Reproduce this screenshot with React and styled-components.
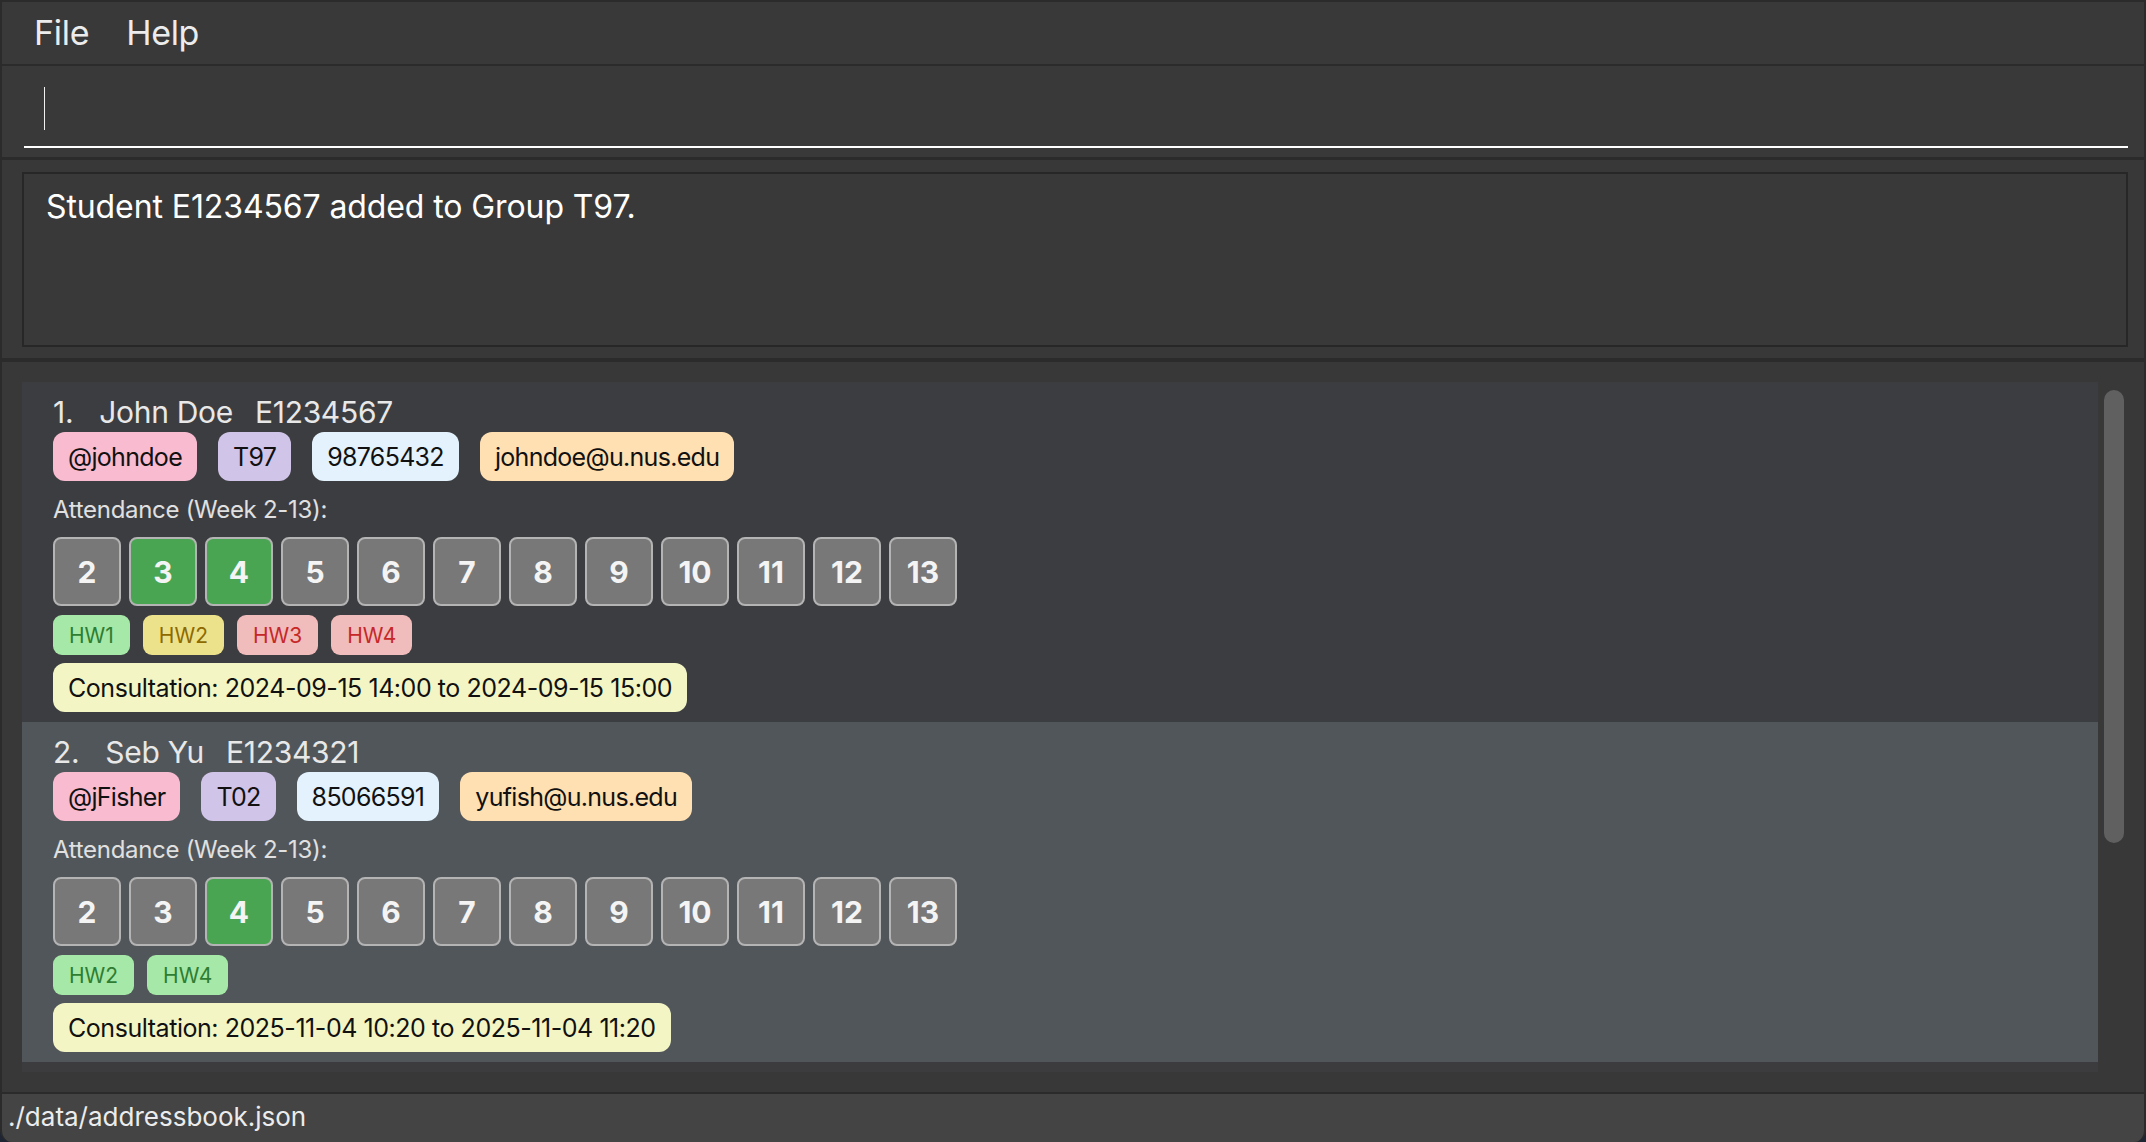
import React from "react";
import styled, { createGlobalStyle } from "styled-components";

const GlobalStyle = createGlobalStyle`
  * { box-sizing: border-box; }
  html, body {
    margin: 0;
    padding: 0;
    background: #1e2633;
    font-family: Inter, "Noto Sans", sans-serif;
  }
`;

const students = [
  {
    index: 1,
    name: "John Doe",
    id: "E1234567",
    telegram: "@johndoe",
    group: "T97",
    phone: "98765432",
    email: "johndoe@u.nus.edu",
    present: [3, 4],
    homework: [
      { label: "HW1", status: "done" },
      { label: "HW2", status: "pending" },
      { label: "HW3", status: "late" },
      { label: "HW4", status: "late" },
    ],
    consultation: "Consultation: 2024-09-15 14:00 to 2024-09-15 15:00",
  },
  {
    index: 2,
    name: "Seb Yu",
    id: "E1234321",
    telegram: "@jFisher",
    group: "T02",
    phone: "85066591",
    email: "yufish@u.nus.edu",
    present: [4],
    homework: [
      { label: "HW2", status: "done" },
      { label: "HW4", status: "done" },
    ],
    consultation: "Consultation: 2025-11-04 10:20 to 2025-11-04 11:20",
  },
];

const weeks = [2, 3, 4, 5, 6, 7, 8, 9, 10, 11, 12, 13];

export default function App() {
  return (
    <>
      <GlobalStyle />
      <Window>
        <MenuBar>
          <MenuItem>File</MenuItem>
          <MenuItem>Help</MenuItem>
        </MenuBar>

        <CommandArea>
          <CommandInput>
            <Caret />
          </CommandInput>
        </CommandArea>

        <ResultArea>
          <ResultBox>Student E1234567 added to Group T97.</ResultBox>
        </ResultArea>

        <ListArea>
          <ListView>
            {students.map((s, i) => (
              <Card key={s.id} $alt={i % 2 === 1}>
                <TitleRow>
                  <span>{s.index}.</span>
                  <Name>{s.name}</Name>
                  <span>{s.id}</span>
                </TitleRow>
                <ChipRow>
                  <Chip $bg="#f8bbd0">{s.telegram}</Chip>
                  <Chip $bg="#d1c4e9">{s.group}</Chip>
                  <Chip $bg="#e3f2fd">{s.phone}</Chip>
                  <Chip $bg="#ffe0b2">{s.email}</Chip>
                </ChipRow>
                <AttendanceLabel>Attendance (Week 2-13):</AttendanceLabel>
                <WeekRow>
                  {weeks.map((w) => (
                    <WeekBox key={w} $present={s.present.includes(w)}>
                      {w}
                    </WeekBox>
                  ))}
                </WeekRow>
                <HomeworkRow>
                  {s.homework.map((h) => (
                    <Homework key={h.label} $status={h.status}>
                      {h.label}
                    </Homework>
                  ))}
                </HomeworkRow>
                <Consultation>{s.consultation}</Consultation>
              </Card>
            ))}
          </ListView>
          <ScrollTrack>
            <ScrollThumb />
          </ScrollTrack>
        </ListArea>

        <StatusBar>./data/addressbook.json</StatusBar>
      </Window>
    </>
  );
}

const hwColors = {
  done: { bg: "#a6e8a8", fg: "#2e7d32" },
  pending: { bg: "#ede28c", fg: "#8d6a00" },
  late: { bg: "#f0bcbc", fg: "#c62828" },
};

const Window = styled.div`
  width: 100vw;
  height: 100vh;
  display: flex;
  flex-direction: column;
  background: #383838;
  border: 2px solid #2b2b2b;
  border-bottom: none;
  border-radius: 0 0 12px 12px;
  overflow: hidden;
`;

const MenuBar = styled.div`
  height: 64px;
  flex-shrink: 0;
  display: flex;
  align-items: center;
  gap: 37px;
  padding: 0 0 2px 32px;
  background: #393939;
  border-bottom: 2px solid #2b2b2b;
`;

const MenuItem = styled.span`
  font-size: 34px;
  color: #ececec;
  letter-spacing: -0.3px;
`;

const CommandArea = styled.div`
  height: 94px;
  flex-shrink: 0;
  display: flex;
  align-items: flex-end;
  padding: 0 16px 9px 22px;
  background: #393939;
  border-bottom: 3px solid #2b2b2b;
`;

const CommandInput = styled.div`
  flex: 1;
  height: 72px;
  display: flex;
  align-items: center;
  padding: 0 0 6px 20px;
  border-bottom: 2px solid #ffffff;
`;

const Caret = styled.div`
  width: 1px;
  height: 43px;
  background: #f0f0f0;
`;

const ResultArea = styled.div`
  height: 202px;
  flex-shrink: 0;
  padding: 12px 16px 11px 20px;
  background: #383838;
  border-bottom: 4px solid #2b2b2b;
`;

const ResultBox = styled.div`
  height: 100%;
  padding: 13px 22px;
  border: 2px solid #272727;
  background: #393939;
  color: #ffffff;
  font-size: 32px;
  letter-spacing: -0.1px;
`;

const ListArea = styled.div`
  flex: 1;
  min-height: 0;
  display: flex;
  padding: 20px 0 20px 20px;
  background: #383838;
`;

const ListView = styled.div`
  flex: 1;
  background: #3c3c3e;
  overflow: hidden;
`;

const ScrollTrack = styled.div`
  width: 46px;
  flex-shrink: 0;
  padding: 8px 0 0 6px;
`;

const ScrollThumb = styled.div`
  width: 20px;
  height: 453px;
  border-radius: 10px;
  background: #606060;
`;

const Card = styled.div`
  height: 340px;
  padding: 12px 31px 10px;
  background: ${(p) => (p.$alt ? "#51565a" : "#3c3d40")};
  display: flex;
  flex-direction: column;
  align-items: flex-start;
`;

const TitleRow = styled.div`
  display: flex;
  gap: 22px;
  font-size: 30px;
  color: #e8e8e8;
  line-height: 36px;
  letter-spacing: -0.3px;
`;

const Name = styled.span`
  margin-left: 4px;
`;

const ChipRow = styled.div`
  display: flex;
  gap: 21px;
  margin-top: 2px;
`;

const Chip = styled.div`
  height: 49px;
  display: flex;
  align-items: center;
  padding: 0 15px;
  border-radius: 12px;
  background: ${(p) => p.$bg};
  color: #111111;
  font-size: 25px;
  letter-spacing: -0.7px;
`;

const AttendanceLabel = styled.div`
  margin-top: 14px;
  height: 29px;
  line-height: 29px;
  font-size: 24px;
  color: #e0e0e0;
  letter-spacing: -0.3px;
`;

const WeekRow = styled.div`
  display: flex;
  gap: 8px;
  margin-top: 13px;
`;

const WeekBox = styled.div`
  width: 68px;
  height: 69px;
  display: flex;
  align-items: center;
  justify-content: center;
  border: 2px solid #b4b4b4;
  border-radius: 8px;
  background: ${(p) => (p.$present ? "#4aa552" : "#787878")};
  color: #f4f4f4;
  font-size: 30px;
  font-weight: 700;
`;

const HomeworkRow = styled.div`
  display: flex;
  gap: 13px;
  margin-top: 9px;
`;

const Homework = styled.div`
  height: 40px;
  display: flex;
  align-items: center;
  padding: 0 16px;
  border-radius: 9px;
  background: ${(p) => hwColors[p.$status].bg};
  color: ${(p) => hwColors[p.$status].fg};
  font-size: 21px;
`;

const Consultation = styled.div`
  margin-top: 8px;
  height: 49px;
  display: flex;
  align-items: center;
  padding: 0 15px;
  border-radius: 12px;
  background: #f3f6c4;
  color: #111111;
  font-size: 25px;
  letter-spacing: -0.45px;
`;

const StatusBar = styled.div`
  height: 50px;
  flex-shrink: 0;
  display: flex;
  align-items: center;
  padding: 0 0 4px 6px;
  background: #444444;
  border-top: 2px solid #2b2b2b;
  color: #ececec;
  font-size: 26px;
`;
